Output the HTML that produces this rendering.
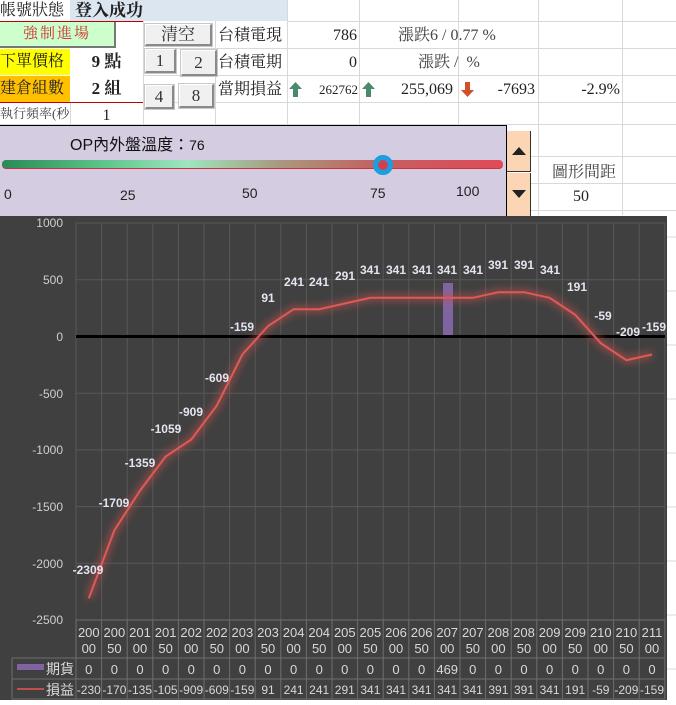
<!DOCTYPE html>
<html><head><meta charset="utf-8">
<style>
*{margin:0;padding:0;box-sizing:border-box}
body{width:676px;height:705px;overflow:hidden;background:#fff;position:relative;font-family:"Liberation Serif","Noto Serif CJK SC",serif;color:#222}
.a{position:absolute;white-space:nowrap}
.hl{position:absolute;height:1px;background:#d9d9d9}
.vl{position:absolute;width:1px;background:#d9d9d9}
.btn{position:absolute;background:#f0f0f0;border:1px solid #fff;border-right:2px solid #8a8a8a;border-bottom:2px solid #8a8a8a;outline:1px solid #c8c8c8;font-size:17px;text-align:center;color:#333}
.t16{font-size:16px}
</style></head><body>
<div class="hl" style="left:287px;top:21px;width:389px"></div>
<div class="hl" style="left:143px;top:48px;width:533px"></div>
<div class="hl" style="left:143px;top:75px;width:533px"></div>
<div class="hl" style="left:0;top:102px;width:676px"></div>
<div class="hl" style="left:0;top:124px;width:676px"></div>
<div class="hl" style="left:531px;top:156px;width:145px"></div>
<div class="hl" style="left:531px;top:183px;width:145px"></div>
<div class="hl" style="left:531px;top:210px;width:145px"></div>
<div class="vl" style="left:70px;top:102px;height:23px"></div>
<div class="vl" style="left:143px;top:21px;height:104px"></div>
<div class="vl" style="left:215px;top:21px;height:104px"></div>
<div class="vl" style="left:287px;top:0;height:125px"></div>
<div class="vl" style="left:359px;top:0;height:125px"></div>
<div class="vl" style="left:458px;top:0;height:125px"></div>
<div class="vl" style="left:538px;top:0;height:215px"></div>
<div class="vl" style="left:622px;top:0;height:215px"></div>

<div class="a" style="left:70px;top:0;width:217px;height:21px;background:#dce6f1"></div>
<div class="a t16" style="left:0;top:0;line-height:21px">帳號狀態</div>
<div class="a" style="left:75px;top:0;line-height:21px;font-size:17px;font-weight:bold">登入成功</div>
<div class="a" style="left:0;top:21px;width:143px;height:1px;background:#c00000"></div>

<div class="a" style="left:0;top:22px;width:116px;height:26px;background:#ccffcc;border-right:2px solid #777;border-bottom:2px solid #777;color:#d03030;font-size:15px;text-align:center;line-height:24px;letter-spacing:2px">強制進場</div>
<div class="btn" style="left:145px;top:24px;width:67px;height:22px;line-height:19px">清空</div>
<div class="a t16" style="left:218px;top:22px;line-height:27px">台積電現</div>
<div class="a t16" style="left:287px;top:22px;width:70px;text-align:right;line-height:27px">786</div>
<div class="a t16" style="left:398px;top:22px;line-height:27px;color:#444">漲跌6 / 0.77 %</div>

<div class="a t16" style="left:0;top:49px;width:70px;height:26px;background:#ffff00;line-height:26px">下單價格</div>
<div class="a" style="left:70px;top:49px;width:73px;text-align:center;line-height:26px;font-size:17px;font-weight:bold">9 點</div>
<div class="btn" style="left:145px;top:49px;width:31px;height:24px;line-height:22px">1</div>
<div class="btn" style="left:181px;top:50px;width:36px;height:26px;line-height:24px">2</div>
<div class="a t16" style="left:218px;top:49px;line-height:27px">台積電期</div>
<div class="a t16" style="left:287px;top:49px;width:70px;text-align:right;line-height:27px">0</div>
<div class="a t16" style="left:418px;top:49px;line-height:27px;color:#444">漲跌 /&nbsp; %</div>

<div class="a t16" style="left:0;top:76px;width:70px;height:26px;background:#ffc000;line-height:26px">建倉組數</div>
<div class="a" style="left:70px;top:76px;width:73px;text-align:center;line-height:26px;font-size:17px;font-weight:bold">2 組</div>
<div class="a" style="left:0;top:102px;width:143px;height:1px;background:#c00000"></div>
<div class="btn" style="left:145px;top:85px;width:29px;height:24px;line-height:22px">4</div>
<div class="btn" style="left:179px;top:84px;width:35px;height:24px;line-height:22px">8</div>
<div class="a t16" style="left:218px;top:76px;line-height:27px">當期損益</div>
<svg class="a" style="left:289px;top:82px" width="13" height="15"><path d="M6.5 0 L13 7 L9 7 L9 15 L4 15 L4 7 L0 7 Z" fill="#4a8a6a"/></svg>
<div class="a" style="left:303px;top:76px;width:55px;text-align:right;line-height:27px;font-size:13px">262762</div>
<svg class="a" style="left:362px;top:82px" width="13" height="15"><path d="M6.5 0 L13 7 L9 7 L9 15 L4 15 L4 7 L0 7 Z" fill="#4a8a6a"/></svg>
<div class="a t16" style="left:380px;top:76px;width:73px;text-align:right;line-height:27px">255,069</div>
<svg class="a" style="left:461px;top:82px" width="13" height="15"><path d="M6.5 15 L13 8 L9 8 L9 0 L4 0 L4 8 L0 8 Z" fill="#d0502a"/></svg>
<div class="a t16" style="left:470px;top:76px;width:65px;text-align:right;line-height:27px">-7693</div>
<div class="a t16" style="left:540px;top:76px;width:80px;text-align:right;line-height:27px">-2.9%</div>

<div class="a" style="left:0;top:103px;line-height:22px;font-size:13px;color:#444">執行頻率(秒</div>
<div class="a t16" style="left:70px;top:103px;width:73px;text-align:center;line-height:26px">1</div>

<div class="a" style="left:0;top:125px;width:507px;height:91px;background:#d4cce0;border-top:1px solid #000;border-right:1px solid #000"></div>
<div class="a" style="left:70px;top:131px;font-family:'Liberation Sans','Noto Sans CJK TC',sans-serif;font-size:16px;color:#111">OP內外盤溫度：<span style="font-size:14px">76</span></div>
<div class="a" style="left:2px;top:160px;width:501px;height:9px;border-radius:4px;background:linear-gradient(90deg,#2a8a55 0%,#5cc48a 20%,#9fe6c0 37%,#a89a80 55%,#c46060 75%,#e04a58 100%);border-bottom:1px solid #d03040"></div>
<div class="a" style="left:373px;top:155px;width:20px;height:20px;border-radius:50%;border:5px solid #1a9fe0;background:#d04050"></div>
<div class="a" style="font-family:'Liberation Sans',sans-serif;font-size:14px;left:4px;top:186px">0</div>
<div class="a" style="font-family:'Liberation Sans',sans-serif;font-size:14px;left:120px;top:187px">25</div>
<div class="a" style="font-family:'Liberation Sans',sans-serif;font-size:14px;left:242px;top:185px">50</div>
<div class="a" style="font-family:'Liberation Sans',sans-serif;font-size:14px;left:370px;top:185px">75</div>
<div class="a" style="font-family:'Liberation Sans',sans-serif;font-size:14px;left:456px;top:183px">100</div>
<div class="a" style="left:507px;top:131px;width:24px;height:41px;background:#fcd5b4;border-right:1px solid #333;border-bottom:1px solid #333"></div>
<div class="a" style="left:507px;top:173px;width:24px;height:43px;background:#fcd5b4;border-right:1px solid #333"></div>
<svg class="a" style="left:512px;top:147px" width="14" height="8"><path d="M7 0 L14 8 L0 8Z" fill="#222"/></svg>
<svg class="a" style="left:512px;top:190px" width="14" height="8"><path d="M0 0 L14 0 L7 8Z" fill="#222"/></svg>
<div class="a t16" style="left:552px;top:159px;color:#444">圖形間距</div>
<div class="a t16" style="left:573px;top:188px">50</div>

<svg class="a" style="left:0;top:0" width="676" height="705" font-family="Liberation Sans, Noto Sans CJK TC, sans-serif">
<defs><filter id="g" x="-10%" y="-10%" width="120%" height="120%"><feGaussianBlur stdDeviation="4"/></filter></defs>
<rect x="0" y="216" width="667" height="484" fill="#404040"/>
<g stroke="#585858" stroke-width="1">
<path d="M76 223V620M101.6 223V620M127.2 223V620M152.8 223V620M178.4 223V620M204 223V620M229.6 223V620M255.2 223V620M280.8 223V620M306.4 223V620M332 223V620M357.6 223V620M383.2 223V620M408.8 223V620M434.4 223V620M460 223V620M485.6 223V620M511.2 223V620M536.8 223V620M562.4 223V620M588 223V620M613.6 223V620M639.2 223V620M664.8 223V620"/>
<path d="M76 223H665M76 279.7H665M76 393.2H665M76 449.9H665M76 506.6H665M76 563.3H665M76 620H665"/>
</g>
<g fill="#cfcfcf" font-size="12" text-anchor="end">
<text x="63" y="227">1000</text><text x="63" y="284">500</text><text x="63" y="341">0</text>
<text x="63" y="398">-500</text><text x="63" y="454">-1000</text><text x="63" y="511">-1500</text>
<text x="63" y="568">-2000</text><text x="63" y="624">-2500</text>
</g>
<rect x="443" y="283" width="10" height="53.5" fill="#8064a2"/>
<line x1="76" y1="336.5" x2="665" y2="336.5" stroke="#000" stroke-width="3"/>
<polyline filter="url(#g)" fill="none" stroke="#c0504d" stroke-opacity="0.7" stroke-width="6" points="88.8,598.3 114.4,530.3 140,490.6 165.6,456.6 191.2,439.6 216.8,405.6 242.4,354.5 268,326.2 293.6,309.2 319.2,309.2 344.8,303.5 370.4,297.8 396,297.8 421.6,297.8 447.2,297.8 472.8,297.8 498.4,292.2 524,292.2 549.6,297.8 575.2,314.8 600.8,343.2 626.4,360.2 652,354.5"/>
<polyline fill="none" stroke="#e05a55" stroke-width="2" points="88.8,598.3 114.4,530.3 140,490.6 165.6,456.6 191.2,439.6 216.8,405.6 242.4,354.5 268,326.2 293.6,309.2 319.2,309.2 344.8,303.5 370.4,297.8 396,297.8 421.6,297.8 447.2,297.8 472.8,297.8 498.4,292.2 524,292.2 549.6,297.8 575.2,314.8 600.8,343.2 626.4,360.2 652,354.5"/>
<g fill="#e4e4f0" font-size="12" font-weight="bold" text-anchor="middle">
<text x="88" y="574">-2309</text><text x="114" y="507">-1709</text><text x="140" y="467">-1359</text>
<text x="166" y="433">-1059</text><text x="191" y="416">-909</text><text x="217" y="382">-609</text>
<text x="242" y="331">-159</text><text x="268" y="302">91</text><text x="294" y="286">241</text>
<text x="319" y="286">241</text><text x="345" y="280">291</text><text x="370" y="274">341</text>
<text x="396" y="274">341</text><text x="422" y="274">341</text><text x="447" y="274">341</text>
<text x="473" y="274">341</text><text x="498" y="269">391</text><text x="524" y="269">391</text>
<text x="550" y="274">341</text><text x="577" y="291">191</text><text x="603" y="320">-59</text>
<text x="628" y="336">-209</text><text x="654" y="331">-159</text>
</g>
<g stroke="#6e6e6e" stroke-width="1" fill="none">
<path d="M76 620V699M101.6 620V699M127.2 620V699M152.8 620V699M178.4 620V699M204 620V699M229.6 620V699M255.2 620V699M280.8 620V699M306.4 620V699M332 620V699M357.6 620V699M383.2 620V699M408.8 620V699M434.4 620V699M460 620V699M485.6 620V699M511.2 620V699M536.8 620V699M562.4 620V699M588 620V699M613.6 620V699M639.2 620V699M664.8 620V699"/>
<path d="M76 620H665M12 658H665M12 679H665M12 699H665M12 658V699"/>
</g>
<rect x="17" y="664" width="27" height="6" fill="#8064a2"/>
<line x1="17" y1="689" x2="44" y2="689" stroke="#c0504d" stroke-width="2"/>
<g fill="#dcdcdc" font-size="14"><text x="46" y="674">期貨</text><text x="46" y="695">損益</text></g>
<g fill="#d8d8d8" font-size="13" text-anchor="middle">
<text y="637"><tspan x="88.8">200</tspan><tspan x="114.4">200</tspan><tspan x="140">201</tspan><tspan x="165.6">201</tspan><tspan x="191.2">202</tspan><tspan x="216.8">202</tspan><tspan x="242.4">203</tspan><tspan x="268">203</tspan><tspan x="293.6">204</tspan><tspan x="319.2">204</tspan><tspan x="344.8">205</tspan><tspan x="370.4">205</tspan><tspan x="396">206</tspan><tspan x="421.6">206</tspan><tspan x="447.2">207</tspan><tspan x="472.8">207</tspan><tspan x="498.4">208</tspan><tspan x="524">208</tspan><tspan x="549.6">209</tspan><tspan x="575.2">209</tspan><tspan x="600.8">210</tspan><tspan x="626.4">210</tspan><tspan x="652">211</tspan></text>
<text y="653"><tspan x="88.8">00</tspan><tspan x="114.4">50</tspan><tspan x="140">00</tspan><tspan x="165.6">50</tspan><tspan x="191.2">00</tspan><tspan x="216.8">50</tspan><tspan x="242.4">00</tspan><tspan x="268">50</tspan><tspan x="293.6">00</tspan><tspan x="319.2">50</tspan><tspan x="344.8">00</tspan><tspan x="370.4">50</tspan><tspan x="396">00</tspan><tspan x="421.6">50</tspan><tspan x="447.2">00</tspan><tspan x="472.8">50</tspan><tspan x="498.4">00</tspan><tspan x="524">50</tspan><tspan x="549.6">00</tspan><tspan x="575.2">50</tspan><tspan x="600.8">00</tspan><tspan x="626.4">50</tspan><tspan x="652">00</tspan></text>
<text y="674"><tspan x="88.8">0</tspan><tspan x="114.4">0</tspan><tspan x="140">0</tspan><tspan x="165.6">0</tspan><tspan x="191.2">0</tspan><tspan x="216.8">0</tspan><tspan x="242.4">0</tspan><tspan x="268">0</tspan><tspan x="293.6">0</tspan><tspan x="319.2">0</tspan><tspan x="344.8">0</tspan><tspan x="370.4">0</tspan><tspan x="396">0</tspan><tspan x="421.6">0</tspan><tspan x="447.2">469</tspan><tspan x="472.8">0</tspan><tspan x="498.4">0</tspan><tspan x="524">0</tspan><tspan x="549.6">0</tspan><tspan x="575.2">0</tspan><tspan x="600.8">0</tspan><tspan x="626.4">0</tspan><tspan x="652">0</tspan></text>
<text y="694" font-size="12"><tspan x="88.8">-230</tspan><tspan x="114.4">-170</tspan><tspan x="140">-135</tspan><tspan x="165.6">-105</tspan><tspan x="191.2">-909</tspan><tspan x="216.8">-609</tspan><tspan x="242.4">-159</tspan><tspan x="268">91</tspan><tspan x="293.6">241</tspan><tspan x="319.2">241</tspan><tspan x="344.8">291</tspan><tspan x="370.4">341</tspan><tspan x="396">341</tspan><tspan x="421.6">341</tspan><tspan x="447.2">341</tspan><tspan x="472.8">341</tspan><tspan x="498.4">391</tspan><tspan x="524">391</tspan><tspan x="549.6">341</tspan><tspan x="575.2">191</tspan><tspan x="600.8">-59</tspan><tspan x="626.4">-209</tspan><tspan x="652">-159</tspan></text>
</g>
<g stroke="#d9d9d9"><path d="M667 237H676M667 291H676M667 345H676M667 399H676M667 453H676M667 507H676M667 561H676M667 615H676M667 669H676"/></g>
</svg>
</body></html>
